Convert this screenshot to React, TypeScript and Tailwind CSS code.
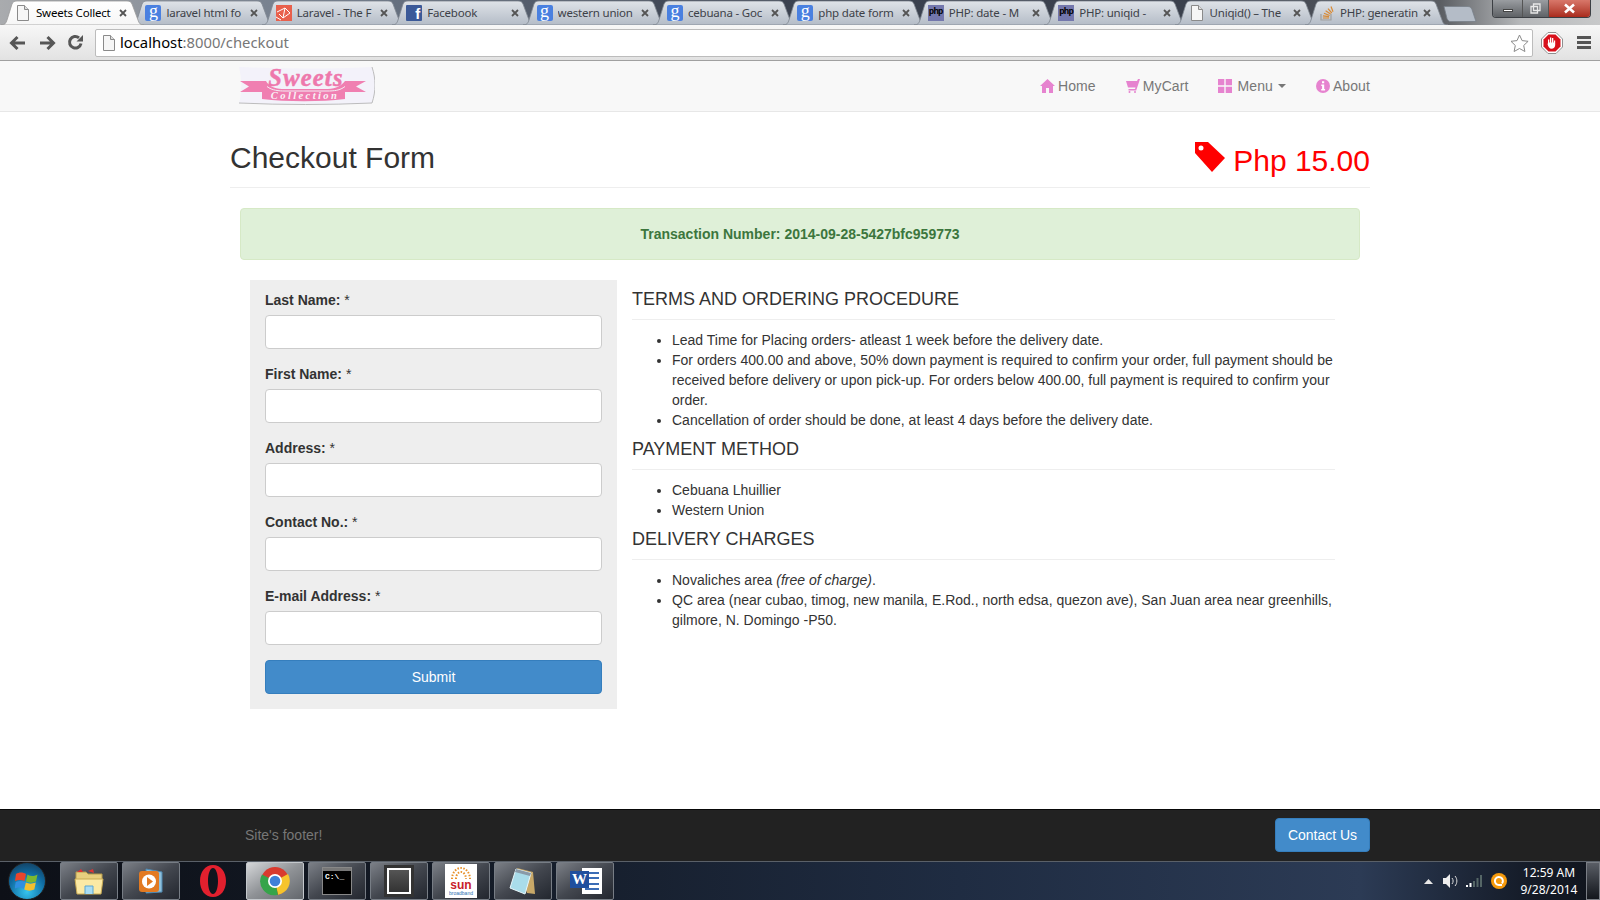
import React from "react";

const PINK = "#e683cf";

function GIcon() {
  return (
    <span className="flex h-4 w-4 shrink-0 items-start justify-center rounded-[2px] bg-[#4a80e0] font-['Liberation_Serif',serif] text-[18px] leading-[12px] text-white">
      g
    </span>
  );
}
function DocIcon() {
  return (
    <svg width="16" height="16" viewBox="-1 0 16 16" className="shrink-0">
      <path d="M1.5.5h7l4 4v11h-11z" fill="#f6f6f6" stroke="#8a8a8a" />
      <path d="M8.5.5v4h4" fill="#ddd" stroke="#8a8a8a" />
    </svg>
  );
}
function LaravelIcon() {
  return (
    <svg width="16" height="16" viewBox="0 0 16 16" className="shrink-0">
      <rect width="16" height="16" fill="#e8604c" />
      <path d="M1 7 9 3l5 5-7 5-4-4M9 3l-2 10M0 12l5 3" stroke="#fff" strokeWidth="1" fill="none" />
    </svg>
  );
}
function FbIcon() {
  return (
    <span className="flex h-4 w-4 shrink-0 items-end justify-end rounded-[1px] bg-[#3b5998] pr-[2px] font-['Liberation_Sans',sans-serif] text-[15px] font-bold leading-[15px] text-white">
      f
    </span>
  );
}
function PhpIcon() {
  return (
    <span className="flex h-4 w-4 shrink-0 items-center justify-center overflow-hidden bg-[#7377ad] font-['Liberation_Mono',monospace] text-[9px] font-bold leading-none tracking-[-0.8px] text-black">
      php
    </span>
  );
}
function SoIcon() {
  return (
    <svg width="16" height="16" viewBox="0 0 16 16" className="shrink-0">
      <path d="M2 9v6h10V9" fill="none" stroke="#a0a0a0" strokeWidth="1.2" />
      <path d="M4 13h6M4 10.8l6 .8M5 8.2l5.6 2.3M6.6 5.8l5 3.2M9 3.6l3.8 4.4M12 1.5l2 5.3" stroke="#d98a35" strokeWidth="1.2" fill="none" />
    </svg>
  );
}

const tabs: { t: string; i: React.ReactNode; active?: boolean }[] = [
  { t: "Sweets Collect", i: <DocIcon />, active: true },
  { t: "laravel html fo", i: <GIcon /> },
  { t: "Laravel - The F", i: <LaravelIcon /> },
  { t: "Facebook", i: <FbIcon /> },
  { t: "western union", i: <GIcon /> },
  { t: "cebuana - Goc", i: <GIcon /> },
  { t: "php date form", i: <GIcon /> },
  { t: "PHP: date - M", i: <PhpIcon /> },
  { t: "PHP: uniqid -", i: <PhpIcon /> },
  { t: "Uniqid() – The", i: <DocIcon /> },
  { t: "PHP: generatin", i: <SoIcon /> },
];

function Tab({ t, i, active }: { t: string; i: React.ReactNode; active?: boolean }) {
  return (
    <div className={`relative flex h-[25px] w-[130.4px] shrink-0 items-center pl-[8px] pr-[10px] ${active ? "z-10" : ""}`}>
      <svg className="absolute left-[-6px] top-0 h-[25px] w-[143px]" viewBox="0 0 143 25" preserveAspectRatio="none">
        <defs>
          <linearGradient id={active ? "ta" : "ti"} x1="0" y1="0" x2="0" y2="1">
            <stop offset="0" stopColor={active ? "#ffffff" : "#dfe3e8"} />
            <stop offset="1" stopColor={active ? "#f6f6f6" : "#b4bcc7"} />
          </linearGradient>
        </defs>
        <path
          d="M0 25c4 0 5-2 6-5L11 4c1-2 2-3 5-3h110c3 0 4 1 5 3l6 16c1 3 2 5 6 5z"
          fill={active ? "url(#ta)" : "url(#ti)"}
          stroke={active ? "#9a9a9a" : "#7f8791"}
          strokeWidth="0.8"
        />
      </svg>
      <span className="relative flex h-[16px] items-center">{i}</span>
      <span
        className={`relative ml-[5px] w-[80px] overflow-hidden whitespace-nowrap font-['Noto_Sans',sans-serif] text-[11.5px] leading-[16px] tracking-[-0.2px] ${active ? "text-black" : "text-[#3d4148]"}`}
      >
        {t}
      </span>
      <svg className="relative ml-auto shrink-0" width="8" height="8" viewBox="0 0 8 8">
        <path d="M1 1l6 6M7 1 1 7" stroke="#555" strokeWidth="1.8" />
      </svg>
    </div>
  );
}

function Home() {
  return (
    <svg width="15" height="14" viewBox="0 0 15 14" className="shrink-0">
      <path d="M7.5 0 15 7h-2v7H9V9H6v5H2V7H0z" fill={PINK} />
    </svg>
  );
}
function Cart() {
  return (
    <svg width="14" height="14" viewBox="0 0 14 14" className="shrink-0">
      <path d="M14 0h-2l-1 2H0l2 6.5h7.5L9 10H2.5v1.5h7.7z" fill={PINK} />
      <circle cx="3.5" cy="13" r="1" fill={PINK} />
      <circle cx="9" cy="13" r="1" fill={PINK} />
    </svg>
  );
}
function Grid() {
  return (
    <svg width="14" height="14" viewBox="0 0 14 14" className="shrink-0">
      <path d="M0 0h6.3v6.3H0zM7.7 0H14v6.3H7.7zM0 7.7h6.3V14H0zM7.7 7.7H14V14H7.7z" fill={PINK} />
    </svg>
  );
}
function Info() {
  return (
    <svg width="14" height="14" viewBox="0 0 14 14" className="shrink-0">
      <circle cx="7" cy="7" r="7" fill={PINK} />
      <path d="M6 2.3h2.2v2H6zM5.3 5.5h2.9v4.6h.9v1.4H5.2v-1.4h.9V6.9h-.8z" fill="#fff" />
    </svg>
  );
}

function NavLink({ icon, children }: { icon: React.ReactNode; children: React.ReactNode }) {
  return (
    <div className="flex items-center gap-[3px] px-[15px] text-[14px] tracking-[0.1px] text-[#777]">
      {icon}
      {children}
    </div>
  );
}

function Logo() {
  return (
    <svg width="137" height="40" viewBox="0 0 137 40" className="ml-[23px]">
      <path d="M1 1c45 2 90 2 133 0 4 12 4 24 0 36-44 2-89 2-133 0 3-11 3-24 0-36z" fill="#f3f2fa" />
      <path d="M134 1c4 12 4 24 0 36-44 2-89 2-133 0" fill="none" stroke="#b5b5b5" strokeWidth="0.9" />
      <path d="M2 15h26c2 4 8 8 16 8h46c8 0 14-4 17-8h21l-10 5.500 10 5.500h-21v7c-24 3-58 3-83 0v-7H2l9-5.500z" fill="#f07fb1" />
      <path d="M29 20.500c5 4 12 4.500 18 4.500h42c7 0 13-.5 18-4.500" fill="none" stroke="#f5eef5" strokeWidth="1" />
      <text x="68" y="20" textAnchor="middle" fontFamily="'Liberation Serif', serif" fontStyle="italic" fontWeight="700" fontSize="24.500" letterSpacing="1.200" stroke="#ee78ac" strokeWidth="0.5" fill="#ee78ac">
        Sweets
      </text>
      <text x="67" y="32.500" textAnchor="middle" fontFamily="'Liberation Serif', serif" fontStyle="italic" fontWeight="700" fontSize="10.500" letterSpacing="2.400" fill="#f9f2f7">
        Collection
      </text>
    </svg>
  );
}

function Field({ label }: { label: string }) {
  return (
    <div className="mb-[15px]">
      <div className="mb-[5px] h-[20px] text-[14px] leading-[20px]">
        <b>{label}</b> *
      </div>
      <div className="h-[34px] rounded-[4px] border border-[#ccc] bg-white" />
    </div>
  );
}

function H4({ children }: { children: React.ReactNode }) {
  return <div className="mb-[10px] mt-[9px] border-b border-[#eee] pb-[10px] text-[18px] leading-[20px]">{children}</div>;
}

function TaskButton({ children, plain, active }: { children: React.ReactNode; plain?: boolean; active?: boolean }) {
  return (
    <div
      className={`flex h-[38px] w-[58px] shrink-0 items-center justify-center rounded-[2px] ${
        plain
          ? ""
          : active
            ? "border border-[#c4c8cc] bg-gradient-to-br from-[#d5d7d9] via-[#8f9296] to-[#63676c]"
            : "border border-[#777d85] bg-gradient-to-br from-[#7c8087] via-[#43474f] to-[#23272f]"
      }`}
    >
      {children}
    </div>
  );
}

export default function App() {
  return (
    <div className="flex h-[900px] w-[1600px] flex-col overflow-hidden bg-white font-['Liberation_Sans',Arial,sans-serif] text-[#333]">
      {/* window frame and tabs */}
      <div className="relative flex h-[25px] shrink-0 bg-[linear-gradient(90deg,#a9abae_0%,#6f7a8a_20%,#3b4250_45%,#3a404c_75%,#5a5d62_90%,#b6b8ba_95%,#c8c9ca_100%)] pl-[7px]">
        {tabs.map((x) => (
          <Tab key={x.t} {...x} />
        ))}
        <svg width="34" height="16" viewBox="0 0 34 16" className="ml-[2px] mt-[6px]">
          <path d="M1 .5h24c2 0 3 1 4 3l4 12H7c-1 0-2-1-3-3z" fill="#b4bcc7" stroke="#777f88" strokeWidth="0.8" />
        </svg>
        <div className="absolute right-[9px] top-0 flex h-[18px] overflow-hidden rounded-b-[4px] border border-t-0 border-[#3c3f44]">
          <div className="flex w-[30px] items-center justify-center border-r border-[#555] bg-gradient-to-b from-[#9a9da1] to-[#5f6266]">
            <span className="mt-[3px] h-[3px] w-[10px] border border-[#444] bg-white" />
          </div>
          <div className="flex w-[26px] items-center justify-center border-r border-[#555] bg-gradient-to-b from-[#9a9da1] to-[#5f6266]">
            <svg width="11" height="11" viewBox="0 0 11 11">
              <path d="M3.5 1h6.5v6.5H3.5zM1 3.5h6.5V10H1z" fill="none" stroke="#e8e8e8" strokeWidth="1.3" />
            </svg>
          </div>
          <div className="flex w-[41px] items-center justify-center bg-gradient-to-b from-[#d8776a] to-[#a92a1c]">
            <svg width="13" height="11" viewBox="0 0 13 11">
              <path d="M2 1.5l9 8M11 1.5l-9 8" stroke="#fff" strokeWidth="2.6" />
            </svg>
          </div>
        </div>
      </div>

      {/* toolbar */}
      <div className="flex h-[36px] shrink-0 items-center border-b border-[#a0a0a0] bg-gradient-to-b from-[#f7f7f7] to-[#e2e2e2] pl-[9px]">
        <svg width="18" height="16" viewBox="0 0 18 16" className="shrink-0">
          <path d="M16 8H3M8.5 2 2.5 8l6 6" fill="none" stroke="#565656" strokeWidth="3" />
        </svg>
        <svg width="18" height="16" viewBox="0 0 18 16" className="ml-[11px] shrink-0">
          <path d="M2 8h13M9.5 2l6 6-6 6" fill="none" stroke="#565656" strokeWidth="3" />
        </svg>
        <svg width="17" height="17" viewBox="0 0 17 17" className="ml-[11px] shrink-0">
          <path d="M14 9.5A5.8 5.8 0 1 1 12 3.8" fill="none" stroke="#565656" strokeWidth="3" />
          <path d="M9.5 7.5 16 7.5 16 1z" fill="#565656" />
        </svg>
        <div className="ml-[11px] flex h-[28px] w-[1438px] shrink-0 items-center rounded-[2px] border border-[#bcbcbc] bg-white pl-[5px]">
          <DocIcon />
          <span className="ml-[3px] font-['Noto_Sans',sans-serif] text-[14.8px] text-black">
            localhost<span className="text-[#777]">:8000/checkout</span>
          </span>
          <svg width="19" height="18" viewBox="0 0 19 18" className="ml-auto mr-[3px]">
            <path d="M9.5 1l2.6 5.6 6 .7-4.4 4.2 1.2 6-5.4-3-5.4 3 1.2-6L1 7.3l6-.7z" fill="#fff" stroke="#8a8a8a" />
          </svg>
        </div>
        <svg width="22" height="22" viewBox="0 0 22 22" className="ml-[8px] shrink-0">
          <path d="M7 .5h8L21.500 7v8L15 21.500H7L.5 15V7z" fill="#fff" stroke="#8f8f8f" />
          <path d="M7.500 2.500h7l5 5v7l-5 5h-7l-5-5v-7z" fill="#d8101b" />
          <path d="M7 10.500V7.500h1.300v3h.7V5.500h1.300v5h.7V6h1.300v4.500h.6V8.500h1.300v4.500c0 2.300-1.700 3.800-3.600 3.800-2.200 0-3.100-1.700-4-4.300z" fill="#fff" />
        </svg>
        <div className="ml-[14px] flex w-[14px] shrink-0 flex-col gap-[2px]">
          <span className="h-[3px] bg-[#555]" />
          <span className="h-[3px] bg-[#555]" />
          <span className="h-[3px] bg-[#555]" />
        </div>
      </div>

      {/* navbar */}
      <div className="h-[51px] shrink-0 border-b border-[#e7e7e7] bg-[#f8f8f8]">
        <div className="mx-auto flex h-full w-[1170px] items-center justify-between">
          <Logo />
          <div className="flex items-center">
            <NavLink icon={<Home />}>Home</NavLink>
            <NavLink icon={<Cart />}>MyCart</NavLink>
            <NavLink icon={<Grid />}>
              <span className="ml-[2px]">Menu</span>
              <span className="ml-[2px] h-0 w-0 border-x-[4px] border-t-[4px] border-x-transparent border-t-[#777]" />
            </NavLink>
            <NavLink icon={<Info />}>About</NavLink>
          </div>
        </div>
      </div>

      {/* main */}
      <div className="flex-1">
        <div className="mx-auto w-[1170px] px-[15px]">
          <div className="flex h-[76px] items-end justify-between border-b border-[#eee] pb-[9px]">
            <div className="text-[30px] leading-[40px]">Checkout Form</div>
            <div className="flex items-start text-[30px] leading-[40px] text-[#f00]">
              <svg width="30" height="30" viewBox="0 0 30 30" className="mr-[8px] mt-[4px]">
                <path fillRule="evenodd" d="M0 0h13l17 16-13 14L0 11zM3.500 6a2.500 2.500 0 1 0 5 0 2.500 2.500 0 1 0-5 0z" fill="#f00" />
              </svg>
              <span className="mb-[-3px] mt-[3px]">Php 15.00</span>
            </div>
          </div>

          <div className="mx-[10px] mt-[20px] flex h-[52px] items-center justify-center rounded-[4px] border border-[#d6e9c6] bg-[#dff0d8] text-[14px] font-bold text-[#3c763d]">
            Transaction Number: 2014-09-28-5427bfc959773
          </div>

          <div className="mt-[20px] flex items-start pl-[20px]">
            <div className="w-[367px] shrink-0 bg-[#eee] px-[15px] pb-[15px] pt-[10px]">
              <Field label="Last Name:" />
              <Field label="First Name:" />
              <Field label="Address:" />
              <Field label="Contact No.:" />
              <Field label="E-mail Address:" />
              <div className="flex h-[34px] items-center justify-center rounded-[4px] border border-[#357ebd] bg-[#428bca] text-[14px] text-white">
                Submit
              </div>
            </div>
            <div className="ml-[15px] w-[703px] shrink-0 text-[14px] leading-[20px]">
              <H4>TERMS AND ORDERING PROCEDURE</H4>
              <ul className="mb-[9px] list-disc pl-[40px]">
                <li>Lead Time for Placing orders- atleast 1 week before the delivery date.</li>
                <li>
                  For orders 400.00 and above, 50% down payment is required to confirm your order, full payment should be received before delivery or upon pick-up. For orders below 400.00, full payment is required to confirm your order.
                </li>
                <li>Cancellation of order should be done, at least 4 days before the delivery date.</li>
              </ul>
              <H4>PAYMENT METHOD</H4>
              <ul className="mb-[9px] list-disc pl-[40px]">
                <li>Cebuana Lhuillier</li>
                <li>Western Union</li>
              </ul>
              <H4>DELIVERY CHARGES</H4>
              <ul className="list-disc pl-[40px]">
                <li>
                  Novaliches area <i>(free of charge)</i>.
                </li>
                <li>
                  QC area (near cubao, timog, new manila, E.Rod., north edsa, quezon ave), San Juan area near greenhills, gilmore, N. Domingo -P50.
                </li>
              </ul>
            </div>
          </div>
        </div>
      </div>

      {/* footer */}
      <div className="h-[52px] shrink-0 border-t border-[#080808] bg-[#222]">
        <div className="mx-auto flex h-full w-[1170px] items-center justify-between pb-[1px] pl-[30px] pr-[15px]">
          <span className="text-[14px] text-[#777]">Site's footer!</span>
          <div className="flex h-[34px] w-[95px] items-center justify-center rounded-[4px] border border-[#357ebd] bg-[#428bca] text-[14px] text-white">
            Contact Us
          </div>
        </div>
      </div>

      {/* taskbar */}
      <div className="flex h-[39px] shrink-0 items-center border-t border-[#5a6068] bg-[linear-gradient(90deg,#0d1017_0%,#141b27_30%,#1f2c42_60%,#2c3b55_85%,#161d2a_95%,#10141c_100%)]">
        <div className="ml-[8px] flex h-[38px] w-[38px] shrink-0 items-center justify-center rounded-full border border-[#222] bg-[radial-gradient(circle_at_50%_80%,#35c4ee,#0f6aa0_55%,#16314a)]">
          <svg width="24" height="22" viewBox="0 0 24 22">
            <path d="M1 4c3-2 7-2 10 0l-1.500 7C6 9.500 3.500 9.500 0 11z" fill="#e8452c" />
            <path d="M12.500 4.500c3 2 6 2 10 0l-1.500 7c-3.500 1.500-6.500 1.500-10 0z" fill="#7cb82f" />
            <path d="M-.2 12c3-1.500 6-1.500 9.500 0l-1.500 7c-3.500-2-6-2-9.500 0z" fill="#2f8fe0" transform="translate(1)" />
            <path d="M10.800 12.500c3 1.500 6 1.500 10 0l-1.500 7c-3.500 1.500-6.500 1.500-10 0z" fill="#f3c02f" />
          </svg>
        </div>
        <div className="ml-[14px] flex gap-[4px]">
          <TaskButton>
            <svg width="30" height="30" viewBox="0 0 30 30">
              <path d="M2 6h10l2 2h14v6H2z" fill="#e8cf7e" stroke="#b69b4a" />
              <path d="M1 13h28l-2 15H3z" fill="#fbe9a4" stroke="#c9ab55" />
              <path d="M11 28v-8h8v8" fill="#a8dcf3" stroke="#5aa5d0" />
              <path d="M3 6l4-3 2 3zM14 5l5-2 1 4z" fill="#d33" />
            </svg>
          </TaskButton>
          <TaskButton>
            <svg width="28" height="30" viewBox="0 0 28 30">
              <path d="M9 3l16 3v20L9 27z" fill="#8ec0dc" stroke="#4f88b0" />
              <rect x="2" y="5" width="20" height="21" rx="3" fill="#e27a22" />
              <circle cx="12" cy="15.500" r="7" fill="#fff" />
              <path d="M10 11l6 4.500-6 4.500z" fill="#e27a22" />
            </svg>
          </TaskButton>
          <TaskButton plain>
            <svg width="28" height="34" viewBox="0 0 28 34">
              <path fillRule="evenodd" d="M14 1c8 0 13 7 13 16s-5 16-13 16S1 26 1 17 6 1 14 1zm0 3c-3 0-5 6-5 13s2 13 5 13 5-6 5-13-2-13-5-13z" fill="#e2202e" />
            </svg>
          </TaskButton>
          <TaskButton active>
            <svg width="30" height="30" viewBox="0 0 30 30">
              <circle cx="15" cy="15" r="14" fill="#d93a2e" />
              <path d="M15 15 28 8a14 14 0 0 1-10 20.700z" fill="#f6c42c" />
              <path d="M15 15 18 28.700A14 14 0 0 1 2 8.500z" fill="#35a44a" />
              <circle cx="15" cy="15" r="7" fill="#fff" />
              <circle cx="15" cy="15" r="5.300" fill="#3f80d8" />
            </svg>
          </TaskButton>
          <TaskButton>
            <div className="flex h-[28px] w-[30px] flex-col border border-[#888] bg-black">
              <span className="h-[3px] bg-[#777]" />
              <span className="pl-[2px] font-['Liberation_Mono',monospace] text-[8px] font-bold leading-[12px] text-white">C:\_</span>
            </div>
          </TaskButton>
          <TaskButton>
            <div className="h-[32px] w-[30px] border-[3px] border-[#333] bg-[#333] p-0">
              <div className="h-full w-full border-2 border-white bg-gradient-to-b from-[#555] to-[#333]" />
            </div>
          </TaskButton>
          <TaskButton>
            <div className="flex h-[34px] w-[32px] flex-col items-center justify-end bg-white pb-[2px] font-['Liberation_Sans',sans-serif] leading-none">
              <svg width="24" height="14" viewBox="0 0 24 14">
                <path d="M3 14A9 11 0 0 1 21 14M7 14A5 7 0 0 1 17 14" fill="none" stroke="#e8912a" strokeWidth="2" strokeDasharray="1.500 1.500" />
              </svg>
              <span className="text-[12px] font-bold text-[#c8202a]">sun</span>
              <span className="text-[5px] text-[#2a6fb0]">broadband</span>
            </div>
          </TaskButton>
          <TaskButton>
            <svg width="30" height="30" viewBox="0 0 30 30">
              <path d="M9 2l16 4 2 22-8-1z" fill="#c8a868" />
              <path d="M8 3l15 4-6 21L2 22z" fill="#a9dcea" stroke="#e8f6fa" />
              <path d="M8 3l15 4-1 3L7 6z" fill="#8a9aa8" />
            </svg>
          </TaskButton>
          <TaskButton>
            <div className="relative h-[32px] w-[34px]">
              <div className="absolute right-0 top-[3px] flex h-[26px] w-[20px] flex-col justify-around bg-white px-[3px] py-[2px]">
                <span className="h-[2px] bg-[#3b6cb5]" />
                <span className="h-[2px] bg-[#3b6cb5]" />
                <span className="h-[2px] bg-[#3b6cb5]" />
                <span className="h-[2px] bg-[#3b6cb5]" />
              </div>
              <div className="absolute left-[2px] top-[6px] flex h-[17px] w-[19px] items-center justify-center bg-[#1f4f9e] font-['Liberation_Serif',serif] text-[15px] font-bold leading-none text-white">
                W
              </div>
            </div>
          </TaskButton>
        </div>
        <div className="ml-auto flex h-full items-center">
          <svg width="9" height="5" viewBox="0 0 9 5" className="mr-[10px]">
            <path d="M4.500 0 9 5H0z" fill="#e8e8e8" />
          </svg>
          <svg width="15" height="14" viewBox="0 0 15 14" className="mr-[8px]">
            <path d="M0 4h3l4-4v14l-4-4H0z" fill="#eee" />
            <path d="M9 4c1.500 2 1.500 4 0 6M12 2c2.500 3 2.500 7 0 10" stroke="#ddd" fill="none" />
          </svg>
          <svg width="16" height="12" viewBox="0 0 16 12" className="mr-[9px]">
            <path d="M0 10h2v2H0z" fill="#fff" />
            <path d="M3.500 8h2v4h-2z" fill="#fff" />
            <path d="M7 6h2v6H7zM10.500 3h2v9h-2zM14 0h2v12h-2z" fill="#566" />
          </svg>
          <svg width="16" height="16" viewBox="0 0 16 16" className="mr-[7px]">
            <circle cx="8" cy="8" r="8" fill="#f59a0c" />
            <path d="M11 10.500A4 4 0 1 0 8 12h3" fill="none" stroke="#fff" strokeWidth="2" />
          </svg>
          <div className="w-[70px] text-center font-['Noto_Sans',sans-serif] text-[12px] leading-[17px] text-white">
            <div>12:59 AM</div>
            <div>9/28/2014</div>
          </div>
          <div className="ml-[2px] mr-0 h-full w-[14px] border border-[#7a7e85] bg-gradient-to-b from-[#5a5e66] to-[#14171d]" />
        </div>
      </div>
    </div>
  );
}
